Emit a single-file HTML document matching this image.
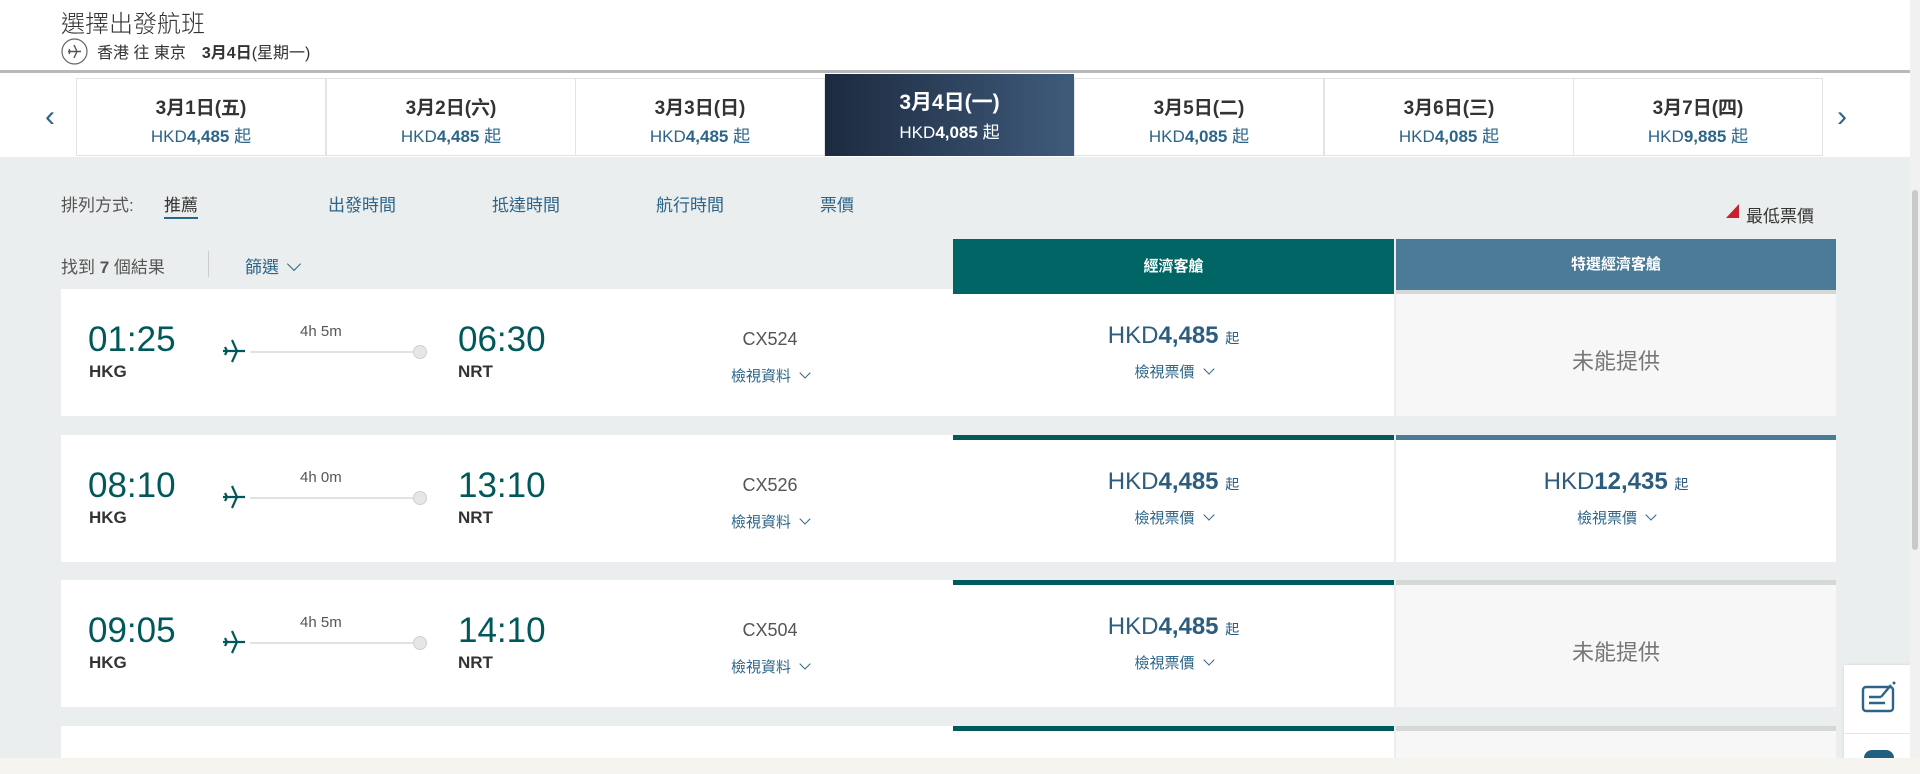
<!DOCTYPE html>
<html style="height:774px;overflow:hidden"><head><meta charset="utf-8">
<style>
*{margin:0;padding:0;box-sizing:border-box}
body{width:1920px;height:774px;overflow:hidden;background:#ebeeee;font-family:"Liberation Sans","Noto Sans CJK TC",sans-serif;position:relative;color:#333}
.abs{position:absolute}
.top{left:0;top:0;width:1910px;height:157px;background:#fff}
.title{left:61px;top:4px;font-size:24px;color:#333;font-family:"Noto Sans CJK TC",sans-serif;font-weight:300}
.sub{left:61px;top:37px;height:28px;font-size:16px;color:#333;display:flex;align-items:center}
.gline{left:0;top:70px;width:1910px;height:3px;background:#b9b9b9}
.tab{top:78px;width:250px;height:78px;background:#fff;border:1px solid #e3e3e3;text-align:center}
.tab .d{font-size:19px;color:#333;margin-top:14px;font-weight:bold}
.tab .p{font-size:17px;color:#2c6589;margin-top:2px}
.tab .p b{font-weight:bold}
.sel{background:linear-gradient(90deg,#1c2a3f,#3f5b7b);border:none;top:74px;height:82px}
.sel .d,.sel .p{color:#fff}
.sel .d{margin-top:12px;font-size:21px}
.arrow{top:100px;font-size:30px;color:#2c6589}
.sort{top:191px;font-size:17px;color:#2c6589}
.card{left:61px;width:892px;height:127px;background:#fff}
.t{font-size:35px;color:#00585a;font-weight:300}
.code{font-size:17px;font-weight:bold;color:#333}
.dur{font-size:15px;color:#555}
.eco{left:953px;width:441px;height:127px;background:#fff;text-align:center}
.pre{left:1396px;width:440px;height:127px;background:#f7f7f7;text-align:center}
.bar{height:5px}
.price{font-size:24px;color:#2c5d7f}
.price b{font-weight:bold}
.price small{font-size:14px}
.view{font-size:15px;color:#2c6589}
.na{font-size:22px;color:#777}
.chev{display:inline-block;width:8px;height:8px;border-right:1.3px solid #2c6589;border-bottom:1.3px solid #2c6589;transform:rotate(45deg);margin-left:10px;position:relative;top:-4px}
</style></head><body>
<div class="abs top"></div>
<div class="abs title">選擇出發航班</div>
<div class="abs sub">
<svg width="27" height="27" viewBox="0 0 27 27"><circle cx="13.5" cy="13.5" r="12.5" fill="none" stroke="#666" stroke-width="1.2"/><path d="M7 13.5h13M13 7l3 6.5-3 6.5M8 11l1 2.5-1 2.5" fill="none" stroke="#555" stroke-width="1.4"/></svg>
<span style="margin-left:9px">香港 往 東京</span><span style="margin-left:16px;font-weight:bold">3月4日</span><span>(星期一)</span></div>
<div class="abs gline"></div>

<div class="abs arrow" style="left:45px">‹</div>
<div class="abs arrow" style="left:1837px">›</div>
<div class="abs tab" style="left:76px"><div class="d">3月1日(五)</div><div class="p">HKD<b>4,485</b> 起</div></div>
<div class="abs tab" style="left:326px"><div class="d">3月2日(六)</div><div class="p">HKD<b>4,485</b> 起</div></div>
<div class="abs tab" style="left:575px"><div class="d">3月3日(日)</div><div class="p">HKD<b>4,485</b> 起</div></div>
<div class="abs tab sel" style="left:825px;width:249px"><div class="d">3月4日(一)</div><div class="p">HKD<b>4,085</b> 起</div></div>
<div class="abs tab" style="left:1074px"><div class="d">3月5日(二)</div><div class="p">HKD<b>4,085</b> 起</div></div>
<div class="abs tab" style="left:1324px"><div class="d">3月6日(三)</div><div class="p">HKD<b>4,085</b> 起</div></div>
<div class="abs tab" style="left:1573px"><div class="d">3月7日(四)</div><div class="p">HKD<b>9,885</b> 起</div></div>

<div class="abs sort" style="left:61px;color:#555">排列方式:</div>
<div class="abs sort" style="left:164px;color:#333;border-bottom:2px solid #2c6589;padding-bottom:1px">推薦</div>
<div class="abs sort" style="left:328px">出發時間</div>
<div class="abs sort" style="left:492px">抵達時間</div>
<div class="abs sort" style="left:656px">航行時間</div>
<div class="abs sort" style="left:820px">票價</div>
<div class="abs" style="left:1726px;top:204px;width:0;height:0;border-left:13px solid transparent;border-bottom:14px solid #c8232c"></div>
<div class="abs" style="left:1746px;top:202px;font-size:17px;color:#333">最低票價</div>
<div class="abs" style="left:61px;top:253px;font-size:17px;color:#555">找到 <b>7</b> 個結果</div>
<div class="abs" style="left:208px;top:251px;width:1px;height:26px;background:#ccc"></div>
<div class="abs" style="left:245px;top:253px;font-size:17px;color:#2c6589">篩選<span class="chev" style="width:10px;height:10px;margin-left:10px"></span></div>
<div class="abs" style="left:953px;top:239px;width:441px;height:55px;background:#006564;color:#fff;font-size:15px;font-weight:bold;text-align:center;line-height:55px">經濟客艙</div>
<div class="abs" style="left:1396px;top:239px;width:440px;height:51px;background:#4b7b96;color:#fff;font-size:15px;font-weight:bold;text-align:center;line-height:51px">特選經濟客艙</div>
<div class="abs" style="left:1396px;top:290px;width:440px;height:4px;background:#d6d8d8"></div>

<div id="rows"></div>
<script>
var rows=[["01:25","06:30","4h 5m","CX524",289,null],["08:10","13:10","4h 0m","CX526",435,"12,435"],["09:05","14:10","4h 5m","CX504",580,null],[null,null,null,null,726,null]];
var h="";
rows.forEach(function(r,i){
var y=r[4];
var cy = i==0?294:y+5;
var H = r[0]?127:32;
h+='<div class="abs card" style="top:'+y+'px;height:'+H+'px"></div>';
if(i>0){h+='<div class="abs bar" style="left:953px;top:'+y+'px;width:441px;background:#00595a"></div>';
h+='<div class="abs bar" style="left:1396px;top:'+y+'px;width:440px;background:'+(r[5]?'#4b7b96':'#d6d8d8')+'"></div>';}
var ch=(i==0?y+127-294:(r[0]?122:27));
h+='<div class="abs eco" style="top:'+cy+'px;height:'+ch+'px"></div>';
h+='<div class="abs pre" style="top:'+cy+'px;height:'+ch+'px;background:'+(r[5]?'#fff':'#f7f7f7')+'"></div>';
if(!r[0])return;
h+='<div class="abs t" style="left:88px;top:'+(y+31)+'px">'+r[0]+'</div>';
h+='<div class="abs code" style="left:89px;top:'+(y+73)+'px">HKG</div>';
h+='<div class="abs t" style="left:458px;top:'+(y+31)+'px">'+r[1]+'</div>';
h+='<div class="abs code" style="left:458px;top:'+(y+73)+'px">NRT</div>';
h+='<div class="abs dur" style="left:300px;top:'+(y+34)+'px">'+r[2]+'</div>';
h+='<svg class="abs" style="left:222px;top:'+(y+49)+'px" width="24" height="26" viewBox="0 0 24 26"><path d="M1 13h22M10 2l5 11-5 11M3 9l2 4-2 4" fill="none" stroke="#00585a" stroke-width="2.2"/></svg>';
h+='<div class="abs" style="left:250px;top:'+(y+62)+'px;width:166px;height:2px;background:#e2e2e2"></div>';
h+='<div class="abs" style="left:413px;top:'+(y+56)+'px;width:14px;height:14px;border-radius:50%;background:#e6e6e6;border:1px solid #d0d0d0"></div>';
h+='<div class="abs" style="left:700px;width:140px;text-align:center;top:'+(y+40)+'px;font-size:18px;color:#555">'+r[3]+'</div>';
h+='<div class="abs view" style="left:700px;width:140px;text-align:center;top:'+(y+76)+'px">檢視資料<span class="chev"></span></div>';
h+='<div class="abs price" style="left:953px;width:441px;text-align:center;top:'+(y+33)+'px">HKD<b>4,485</b> <small>起</small></div>';
h+='<div class="abs view" style="left:953px;width:441px;text-align:center;top:'+(y+72)+'px">檢視票價<span class="chev"></span></div>';
if(r[5]){
h+='<div class="abs price" style="left:1396px;width:440px;text-align:center;top:'+(y+33)+'px">HKD<b>'+r[5]+'</b> <small>起</small></div>';
h+='<div class="abs view" style="left:1396px;width:440px;text-align:center;top:'+(y+72)+'px">檢視票價<span class="chev"></span></div>';
}else{
h+='<div class="abs na" style="left:1396px;width:440px;text-align:center;top:'+(y+55)+'px">未能提供</div>';
}
});
document.getElementById("rows").innerHTML=h;
</script>

<div class="abs" style="left:1844px;top:665px;width:68px;height:93px;background:#fff;box-shadow:0 0 3px rgba(0,0,0,.1)"></div>
<div class="abs" style="left:1844px;top:733px;width:68px;height:1px;background:#e5e5e5"></div>
<svg class="abs" style="left:1861px;top:681px" width="36" height="32" viewBox="0 0 36 32"><rect x="2" y="6" width="30" height="24" rx="3" fill="none" stroke="#2c6589" stroke-width="2.4"/><path d="M8 16h12M8 22h16M20 16l10-12" fill="none" stroke="#2c6589" stroke-width="2.4"/><circle cx="33" cy="2" r="1.5" fill="#2c6589"/></svg>
<div class="abs" style="left:1864px;top:750px;width:30px;height:8px;border-radius:15px 15px 0 0;background:#1f5f80"></div>
<div class="abs" style="left:0;top:758px;width:1920px;height:16px;background:#f6f4ef"></div>
<div class="abs" style="left:1910px;top:0;width:10px;height:758px;background:#f1f1f1"></div>
<div class="abs" style="left:1912px;top:190px;width:6px;height:360px;background:#c9c9c9;border-radius:3px"></div>
</body></html>
